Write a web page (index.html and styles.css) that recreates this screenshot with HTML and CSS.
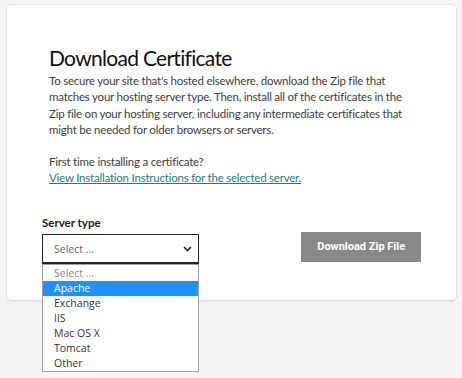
FILE: index.html
```html
<!DOCTYPE html>
<html lang="en">
  <head>
    <meta charset="UTF-8" />
    <title>Download Certificate</title>
    <meta name="viewport" content="width=device-width, initial-scale=1.0" />
    <link rel="stylesheet" href="styles.css">
  </head>
  <body>
    <div class="card">
      <div class="intro">
        <h2>Download Certificate</h2>
        <p>
          To secure your site that's hosted elsewhere, download the Zip file that
          matches your hosting server type. Then, install all of the certificates in the
          Zip file on your hosting server, including any intermediate certificates that
          might be needed for older browsers or servers.
        </p>
        <p>
          First time installing a certificate?<br />
          <a href="#">View Installation Instructions for the selected server.</a>
        </p>
      </div>

      <div class="form-row">
        <div class="field">
          <label class="label">Server type</label>
          <div class="select">
            <span class="select-value">Select ...</span>
            <svg class="chevron" width="9" height="6" viewBox="0 0 9 6">
              <path d="M1 1 L4.5 4.5 L8 1" fill="none" stroke="#222" stroke-width="1.6" />
            </svg>
          </div>
          <ul class="options">
            <li class="placeholder">Select ...</li>
            <li class="active">Apache</li>
            <li>Exchange</li>
            <li>IIS</li>
            <li>Mac OS X</li>
            <li>Tomcat</li>
            <li>Other</li>
          </ul>
        </div>
        <button class="btn">Download Zip File</button>
      </div>
    </div>
  </body>
</html>
```

FILE: styles.css
```css
html {
  height: 100%;
}

body {
  margin: 0;
  min-height: 100%;
  box-sizing: border-box;
  padding: 5px 6px 0 7px;
  background: #f4f5f6;
  font-family: 'Lato', sans-serif;
  color: #444;
}

.card {
  background: #ffffff;
  height: 295px;
  box-sizing: border-box;
  padding: 40px 35px 0 35px;
  border-radius: 4px;
  box-shadow: 0 0 0 1px rgba(0, 0, 0, 0.04), 0 1px 3px rgba(0, 0, 0, 0.1);
}

.intro {
  padding: 0 10px 0 7px;
}

h2 {
  margin: 0 0 2px;
  font-size: 21px;
  font-weight: 400;
  line-height: 26px;
  letter-spacing: -0.7px;
  color: #111;
}

p {
  margin: 0 0 16px;
  font-size: 11.5px;
  line-height: 16.3px;
  letter-spacing: -0.22px;
  color: #3d3d3d;
}

.intro p:last-child {
  margin-bottom: 0;
}

a {
  color: #1b7f80;
}

.form-row {
  display: flex;
  align-items: flex-end;
  margin-top: 29px;
}

.field {
  position: relative;
  width: 158px;
}

.label {
  display: block;
  font-size: 11.5px;
  line-height: 14px;
  font-weight: 700;
  color: #222;
  margin-bottom: 4px;
}

.select {
  height: 30px;
  box-sizing: border-box;
  border: 1px solid #222;
  border-bottom-width: 2px;
  display: flex;
  align-items: center;
  justify-content: space-between;
  padding: 1px 6px 0 11px;
  font-family: 'Open Sans', sans-serif;
  font-size: 10.5px;
  color: #666;
}

.options {
  position: absolute;
  top: 100%;
  left: 0;
  right: 0;
  z-index: 1;
  margin: 0;
  padding: 1px 0 0;
  list-style: none;
  background: #fff;
  border: 1px solid #a0a0a0;
  font-family: 'Open Sans', sans-serif;
  font-size: 10.5px;
  color: #333;
}

.options li {
  height: 15px;
  line-height: 15px;
  padding-left: 11px;
}

.options .placeholder {
  color: #888;
}

.options .active {
  background: #1e90ff;
  color: #fff;
}

.btn {
  margin-left: 102px;
  margin-bottom: 2px;
  width: 120px;
  height: 30px;
  border: none;
  background: #888;
  color: #fff;
  font-family: 'Roboto', sans-serif;
  font-size: 11px;
  font-weight: 700;
  cursor: pointer;
}
```
